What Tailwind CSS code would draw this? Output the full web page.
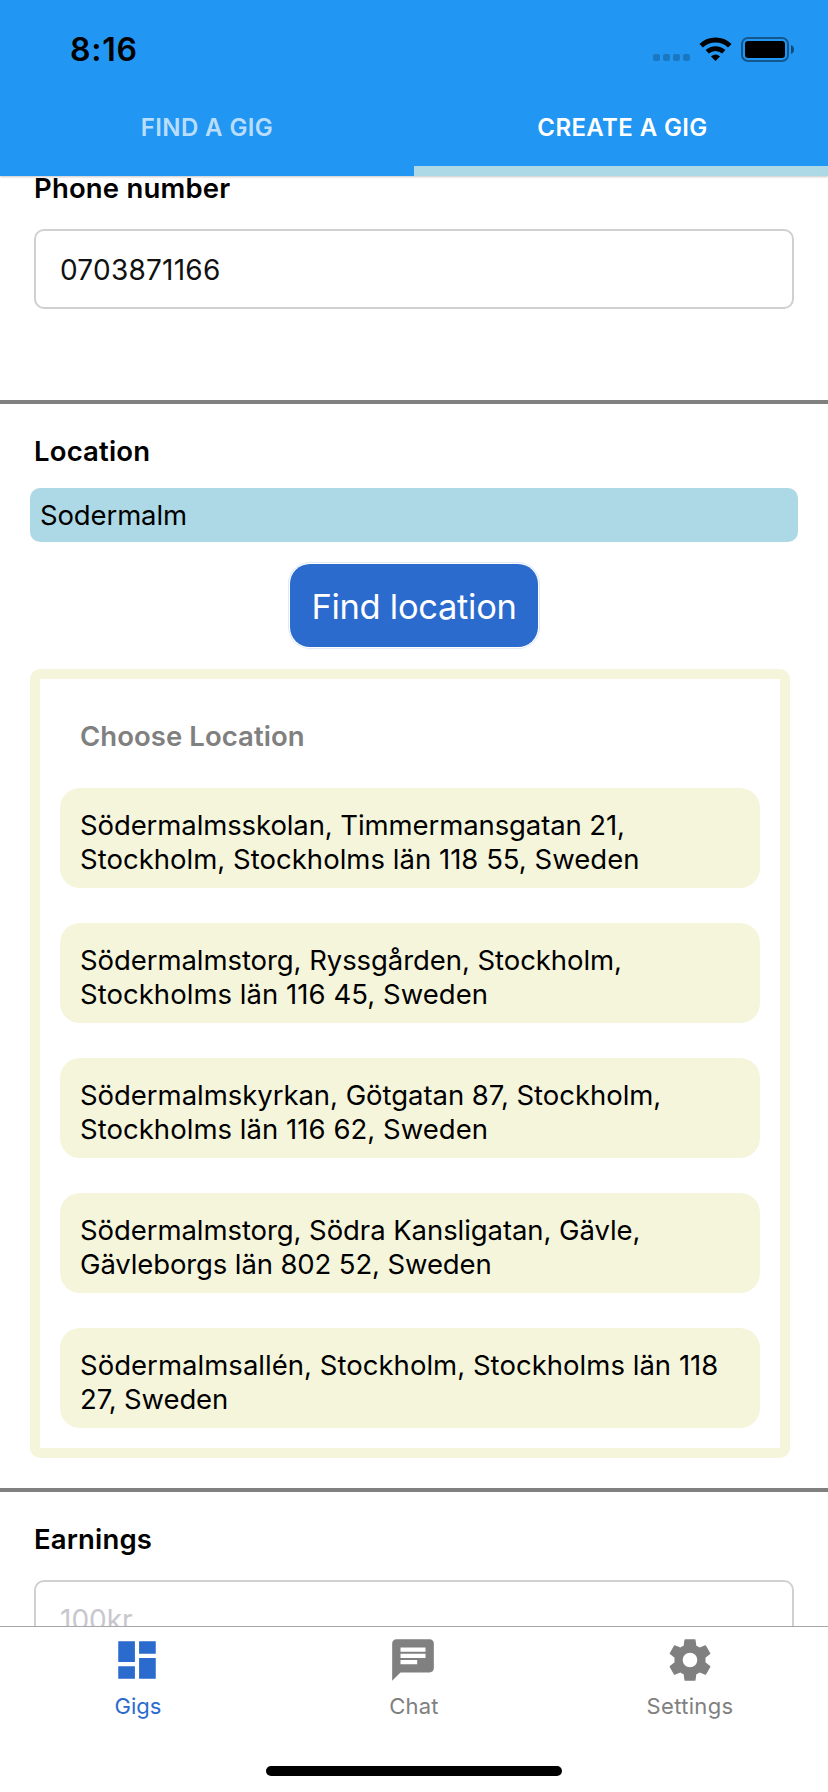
<!DOCTYPE html>
<html lang="en">
<head>
<meta charset="utf-8">
<title>Create a gig</title>
<script src="https://cdn.jsdelivr.net/npm/@tailwindcss/browser@4"></script>
</head>
<body class="bg-white">
<div class="flex h-[1792px] w-[828px] flex-col overflow-hidden bg-white font-['Inter','Liberation_Sans',sans-serif] text-black">

  <header class="z-10 flex h-[176px] shrink-0 flex-col bg-[#2196f3] shadow-[0_1px_2px_rgba(0,0,0,0.22)]">
    <div class="flex h-[88px] justify-between pl-[70px] pr-[33px]">
      <div class="pt-[29px] text-[32px] leading-[42px] font-semibold tracking-[0.76px]">8:16</div>
      <div class="flex items-start pt-[37px]">
        <div class="mt-[17px] flex gap-[3px]">
          <i class="size-[7px] rounded-[2px] bg-black/20"></i><i class="size-[7px] rounded-[2px] bg-black/20"></i><i class="size-[7px] rounded-[2px] bg-black/20"></i><i class="size-[7px] rounded-[2px] bg-black/20"></i>
        </div>
        <svg class="ml-[9px] h-[24px] w-[33px]" viewBox="0 0 33 24" fill="none" stroke="#000">
          <path d="M2.2 8.8A20.6 20.6 0 0 1 30.8 8.8" stroke-width="5"/>
          <path d="M8.2 14.8A12.2 12.2 0 0 1 24.8 14.8" stroke-width="4.8"/>
          <path d="M16.5 24L12 19.4Q16.5 15.6 21 19.4Z" fill="#000" stroke="none"/>
        </svg>
        <svg class="ml-[9px] h-[25px] w-[54px]" viewBox="0 0 54 25">
          <rect x="1" y="1" width="46" height="23" rx="6" fill="none" stroke="#000" stroke-opacity=".42" stroke-width="2"/>
          <rect x="4" y="4" width="40" height="17" rx="3.3"/>
          <path d="M50 8Q53 9.3 53 12.5T50 17Z" fill-opacity=".5"/>
        </svg>
      </div>
    </div>
    <nav class="grid flex-1 grid-cols-2 text-center text-[24px] leading-[40px] font-semibold">
      <div class="pt-[20px] tracking-[0.39px] text-white/70">FIND A GIG</div>
      <div class="border-b-10 border-[#add8e6] pt-[20px] pl-[3px] tracking-[0.38px] text-white">CREATE A GIG</div>
    </nav>
  </header>

  <main class="flex h-[1450px] shrink-0 flex-col overflow-hidden">
    <section class="h-[224px] shrink-0 px-[34px]">
      <h2 class="-mt-[5px] h-[58px] text-[27.5px] leading-[34px] font-semibold tracking-[0.18px]">Phone number</h2>
      <div class="h-[80px] rounded-[10px] border-2 border-[#d0d0d0] px-[24px] text-[28px] leading-[78px] tracking-[0.24px] text-[#111]">0703871166</div>
    </section>

    <section class="shrink-0 border-y-4 border-[#808080] pb-[30px]">
      <h2 class="px-[34px] pt-[30px] text-[27.5px] leading-[34px] font-semibold tracking-[0.17px]">Location</h2>
      <div class="mx-[30px] mt-[20px] h-[54px] rounded-[10px] bg-[#add8e6] px-[10px] text-[27.5px] leading-[54px] tracking-[-0.13px]">Sodermalm</div>
      <div class="mt-[20px] flex justify-center">
        <button class="h-[87px] w-[252px] rounded-[22px] border border-[#2b6acd]/15 bg-white p-[1px]"><span class="block h-[83px] w-[248px] rounded-[20px] bg-[#2b6bcd] text-center text-[34.5px] leading-[85px] tracking-[-0.3px] text-white">Find location</span></button>
      </div>
      <div class="mt-[20px] ml-[30px] w-[760px] rounded-[10px] bg-[#f5f5dc] p-[10px]">
        <div class="bg-white p-[20px]">
          <h3 class="h-[89px] px-[20px] pt-[20px] text-[27.5px] leading-[34px] font-semibold tracking-[0.06px] text-[#808080]">Choose Location</h3>
          <ul class="flex flex-col gap-[35px] text-[27.5px] leading-[34px] whitespace-nowrap">
            <li class="h-[100px] rounded-[20px] bg-[#f5f5dc] px-[20px] pt-[20px]"><p class="tracking-[-0.097px]">Södermalmsskolan, Timmermansgatan 21,</p><p class="tracking-[0.023px]">Stockholm, Stockholms län 118 55, Sweden</p></li>
            <li class="h-[100px] rounded-[20px] bg-[#f5f5dc] px-[20px] pt-[20px]"><p class="tracking-[-0.067px]">Södermalmstorg, Ryssgården, Stockholm,</p><p class="tracking-[0.04px]">Stockholms län 116 45, Sweden</p></li>
            <li class="h-[100px] rounded-[20px] bg-[#f5f5dc] px-[20px] pt-[20px]"><p class="tracking-[-0.04px]">Södermalmskyrkan, Götgatan 87, Stockholm,</p><p class="tracking-[0.04px]">Stockholms län 116 62, Sweden</p></li>
            <li class="h-[100px] rounded-[20px] bg-[#f5f5dc] px-[20px] pt-[20px]"><p class="tracking-[-0.07px]">Södermalmstorg, Södra Kansligatan, Gävle,</p><p class="tracking-[-0.12px]">Gävleborgs län 802 52, Sweden</p></li>
            <li class="h-[100px] rounded-[20px] bg-[#f5f5dc] px-[20px] pt-[20px]"><p class="tracking-[0.03px]">Södermalmsallén, Stockholm, Stockholms län 118</p><p class="tracking-[-0.12px]">27, Sweden</p></li>
          </ul>
        </div>
      </div>
    </section>

    <section class="shrink-0 px-[34px] pt-[30px]">
      <h2 class="h-[58px] text-[27.5px] leading-[34px] font-semibold tracking-[0.16px]">Earnings</h2>
      <div class="h-[80px] rounded-[10px] border-2 border-[#d0d0d0] px-[24px] text-[28px] leading-[77px] text-[#c7c7cd]">100kr</div>
    </section>
  </main>

  <footer class="flex h-[166px] shrink-0 flex-col items-center border-t border-[#a7a7aa] bg-white">
    <nav class="grid h-[139px] w-full grid-cols-3 text-[22px] leading-[28px] text-[#808080]">
      <div class="flex flex-col items-center pt-[8px] text-[#2b6bcd]">
        <svg class="mr-[2px] size-[50px]" viewBox="0 0 24 24" fill="currentColor"><path d="M3 13h8V3H3v10zm0 8h8v-6H3v6zm10 0h8V11h-8v10zm0-18v6h8V3h-8z"/></svg>
        <span class="mt-[7px]">Gigs</span>
      </div>
      <div class="flex flex-col items-center pt-[8px]">
        <svg class="mr-[2px] size-[50px]" viewBox="0 0 24 24" fill="currentColor"><path d="M20 2H4c-1.1 0-1.99.9-1.99 2L2 22l4-4h14c1.1 0 2-.9 2-2V4c0-1.1-.9-2-2-2zM6 6h12v2H6V6zm0 3h12v2H6V9zm8 5H6v-2h8v2z" fill-rule="evenodd"/></svg>
        <span class="mt-[7px] tracking-[0.19px]">Chat</span>
      </div>
      <div class="flex flex-col items-center pt-[8px]">
        <svg class="size-[50px]" viewBox="0 0 24 24" fill="currentColor"><path fill-rule="evenodd" d="M9.7 2h4.6q.3 0 .35.3l.4 2.85q.85.35 1.55.9l2.7-1.1q.25-.1.4.15l2.05 3.6q.1.25-.1.4l-2.25 1.8a8 8 0 0 1 0 2.2l2.25 1.8q.2.15.1.4l-2.05 3.6q-.15.25-.4.15l-2.7-1.1q-.7.55-1.55.9l-.4 2.85q-.05.3-.35.3H9.7q-.3 0-.35-.3l-.4-2.85q-.85-.35-1.55-.9l-2.7 1.1q-.25.1-.4-.15l-2.05-3.6q-.1-.25.1-.4l2.25-1.8a8 8 0 0 1 0-2.2l-2.25-1.8q-.2-.15-.1-.4l2.05-3.6q.15-.25.4-.15l2.7 1.1q.7-.55 1.55-.9l.4-2.85Q9.4 2 9.7 2zM12 8.5a3.5 3.5 0 1 0 0 7 3.5 3.5 0 0 0 0-7z"/></svg>
        <span class="mt-[7px] tracking-[0.34px]">Settings</span>
      </div>
    </nav>
    <div class="h-[10px] w-[296px] rounded-full bg-black"></div>
  </footer>
</div>
</body>
</html>
